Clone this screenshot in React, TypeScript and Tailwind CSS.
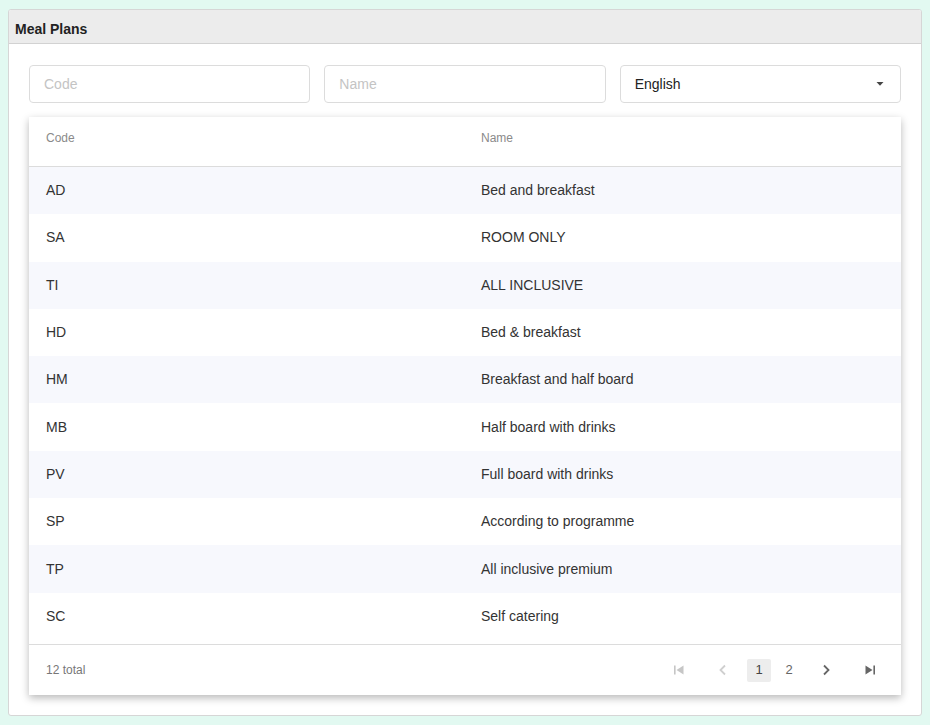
import React from 'react'

const rows = [
  { code: 'AD', name: 'Bed and breakfast' },
  { code: 'SA', name: 'ROOM ONLY' },
  { code: 'TI', name: 'ALL INCLUSIVE' },
  { code: 'HD', name: 'Bed & breakfast' },
  { code: 'HM', name: 'Breakfast and half board' },
  { code: 'MB', name: 'Half board with drinks' },
  { code: 'PV', name: 'Full board with drinks' },
  { code: 'SP', name: 'According to programme' },
  { code: 'TP', name: 'All inclusive premium' },
  { code: 'SC', name: 'Self catering' },
]

function FirstIcon({ color }: { color: string }) {
  return (
    <svg width="12" height="12" viewBox="0 0 12 12">
      <rect x="1" y="1.5" width="1.6" height="9" fill={color} />
      <path d="M10.5 1.5 L3.5 6 L10.5 10.5 Z" fill={color} />
    </svg>
  )
}

function LastIcon({ color }: { color: string }) {
  return (
    <svg width="12" height="12" viewBox="0 0 12 12">
      <path d="M1.5 1.5 L8.5 6 L1.5 10.5 Z" fill={color} />
      <rect x="9.4" y="1.5" width="1.6" height="9" fill={color} />
    </svg>
  )
}

function Chevron({ dir, color }: { dir: 'left' | 'right'; color: string }) {
  return (
    <svg width="10" height="12" viewBox="0 0 10 12">
      <path
        d={dir === 'left' ? 'M7 1.5 L2.5 6 L7 10.5' : 'M3 1.5 L7.5 6 L3 10.5'}
        fill="none"
        stroke={color}
        strokeWidth="1.8"
      />
    </svg>
  )
}

export default function App() {
  return (
    <div className="min-h-[725px] bg-[#e2f9f1] pt-[9px] px-2 pb-[9px] font-['Liberation_Sans',Arial,sans-serif]">
      <div className="bg-white border border-[#d6d6d6] rounded-[3px] h-[707px] overflow-hidden">
        {/* Header */}
        <div className="h-[34px] bg-[#ececec] border-b border-[#d2d2d2] flex items-center pt-[6px] px-[6px]">
          <h1 className="text-[14px] font-bold text-[#222]">Meal Plans</h1>
        </div>

        <div className="px-5 pt-[21px]">
          {/* Filters */}
          <div className="grid grid-cols-3 gap-[14px]">
            <input
              placeholder="Code"
              className="h-[38px] border border-[#dcdcdc] rounded-[4px] px-[14px] text-[14px] placeholder:text-[#c4c4c4] outline-none"
            />
            <input
              placeholder="Name"
              className="h-[38px] border border-[#dcdcdc] rounded-[4px] px-[14px] text-[14px] placeholder:text-[#c4c4c4] outline-none"
            />
            <div className="h-[38px] border border-[#dcdcdc] rounded-[4px] px-[14px] flex items-center justify-between text-[14px] text-[#222]">
              <span>English</span>
              <svg width="10" height="6" viewBox="0 0 10 6" className="mr-[1px]">
                <path d="M1.5 1 L8.5 1 L5 4.8 Z" fill="#444" />
              </svg>
            </div>
          </div>

          {/* Table */}
          <div className="mt-[14px] bg-white shadow-[0_3px_8px_rgba(0,0,0,0.28)]">
            <div className="grid grid-cols-2 h-[50px] pt-[14px] leading-[14px] border-b border-[#dcdcdc] text-[12px] text-[#8a8a8a]">
              <div className="pl-[17px]">Code</div>
              <div className="pl-[16px]">Name</div>
            </div>
            <div className="h-[477px]">
              {rows.map((r, i) => (
                <div
                  key={r.code}
                  className={`grid grid-cols-2 h-[47.3px] items-center text-[14px] text-[#333] ${i % 2 === 0 ? 'bg-[#f7f8fd]' : 'bg-white'}`}
                >
                  <div className="pl-[17px]">{r.code}</div>
                  <div className="pl-[16px]">{r.name}</div>
                </div>
              ))}
            </div>
            <div className="h-[51px] border-t border-[#dcdcdc] flex items-center justify-between pl-[17px] pr-[19px]">
              <span className="text-[12px] text-[#777]">12 total</span>
              <div className="flex items-center text-[13px] text-[#666]">
                <span className="w-6 flex justify-center"><FirstIcon color="#c6c6c6" /></span>
                <span className="w-6 flex justify-center ml-5"><Chevron dir="left" color="#cfcfcf" /></span>
                <span className="w-6 h-[23px] flex items-center justify-center ml-[12px] bg-[#ededed] rounded-[2px] text-[#444]">1</span>
                <span className="w-6 h-[23px] flex items-center justify-center ml-[6px]">2</span>
                <span className="w-6 flex justify-center ml-[13px]"><Chevron dir="right" color="#666" /></span>
                <span className="w-6 flex justify-center ml-5"><LastIcon color="#666" /></span>
              </div>
            </div>
          </div>
        </div>
      </div>
    </div>
  )
}
